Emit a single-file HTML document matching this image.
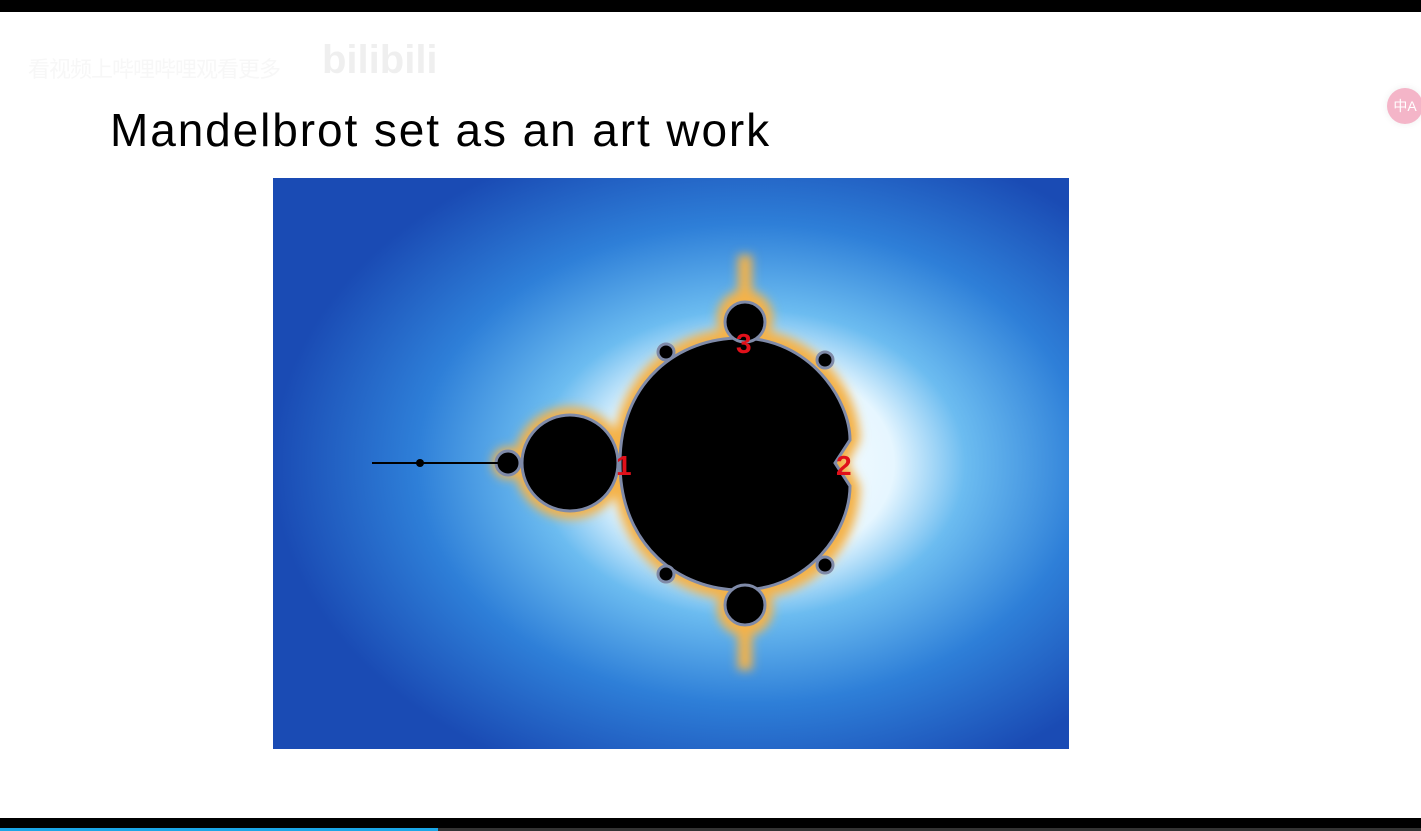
<!DOCTYPE html>
<html><head><meta charset="utf-8"><style>
html,body{margin:0;padding:0;width:1421px;height:831px;overflow:hidden;background:#fff;font-family:"Liberation Sans",sans-serif;position:relative}
.top{position:absolute;left:0;top:0;width:1421px;height:12px;background:#000}
.bot{position:absolute;left:0;top:818px;width:1421px;height:13px;background:#000}
.prog{position:absolute;left:0;top:828px;width:438px;height:3px;background:#1aa6e6}
.prog2{position:absolute;left:438px;top:828px;width:983px;height:3px;background:#333}
h1{position:absolute;left:110px;top:103px;margin:0;font-weight:normal;font-size:46px;color:#000;letter-spacing:1.9px}
.wm{position:absolute;left:28px;top:52px;font-size:22px;color:#f7f7f7;font-family:"Liberation Sans","Noto Sans CJK SC",sans-serif;letter-spacing:-1px}
.bl{position:absolute;left:322px;top:38px;font-size:40px;font-weight:bold;color:#efefef}
.tr{position:absolute;left:1387px;top:88px;width:36px;height:36px;border-radius:50%;background:#f4b5c8;color:#fff;font-size:14px;line-height:36px;text-align:center;font-family:"Liberation Sans","Noto Sans CJK SC",sans-serif;box-shadow:0 0 8px #eee}
svg{position:absolute;left:273px;top:178px}
</style></head><body>
<div class="top"></div>
<div class="wm">看视频上哔哩哔哩观看更多</div>
<div class="bl">bilibili</div>
<div class="tr">中A</div>
<h1>Mandelbrot set as an art work</h1>
<svg width="796" height="571" viewBox="273 178 796 571">
<defs>
<radialGradient id="bg" cx="0.6" cy="0.5" r="0.6">
<stop offset="0" stop-color="#ffffff"/>
<stop offset="0.3" stop-color="#e6f6ff"/>
<stop offset="0.45" stop-color="#6cbcf0"/>
<stop offset="0.7" stop-color="#2e7fd8"/>
<stop offset="1" stop-color="#1a4bb4"/>
</radialGradient>
<filter id="b"><feGaussianBlur stdDeviation="5"/></filter>
</defs>
<rect x="273" y="178" width="796" height="571" fill="url(#bg)"/>
<g filter="url(#b)" fill="#f4b24a">
<path d="M612,463 C612,370 680,328 740,328 C820,328 860,395 860,440 L848,463 L860,486 C860,540 820,600 740,600 C680,600 612,556 612,463 Z"/>
<circle cx="570" cy="463" r="56"/>
<circle cx="745" cy="318" r="28"/>
<circle cx="745" cy="608" r="28"/>
<rect x="738" y="255" width="14" height="60"/>
<rect x="738" y="610" width="14" height="60"/>
<circle cx="508" cy="463" r="16"/>
</g>
<g fill="#000" stroke="#7f8aa8" stroke-width="3">
<path d="M620,463 C620,380 680,338 740,338 C810,338 850,400 850,440 L835,463 L850,486 C850,530 810,590 740,590 C680,590 620,546 620,463 Z"/>
<circle cx="570" cy="463" r="48"/>
<circle cx="745" cy="322" r="20"/>
<circle cx="745" cy="605" r="20"/>
<circle cx="508" cy="463" r="12"/>
<circle cx="666" cy="352" r="8"/>
<circle cx="666" cy="574" r="8"/>
<circle cx="825" cy="565" r="8"/>
<circle cx="825" cy="360" r="8"/>
</g>
<line x1="372" y1="463" x2="500" y2="463" stroke="#000" stroke-width="2"/>
<circle cx="420" cy="463" r="4"/>
<g fill="#e0101a" font-weight="bold" font-size="28" font-family="Liberation Sans,sans-serif">
<text x="616" y="475">1</text><text x="836" y="475">2</text><text x="736" y="353">3</text>
</g>
</svg>
<div class="bot"></div><div class="prog"></div><div class="prog2"></div>
</body></html>
